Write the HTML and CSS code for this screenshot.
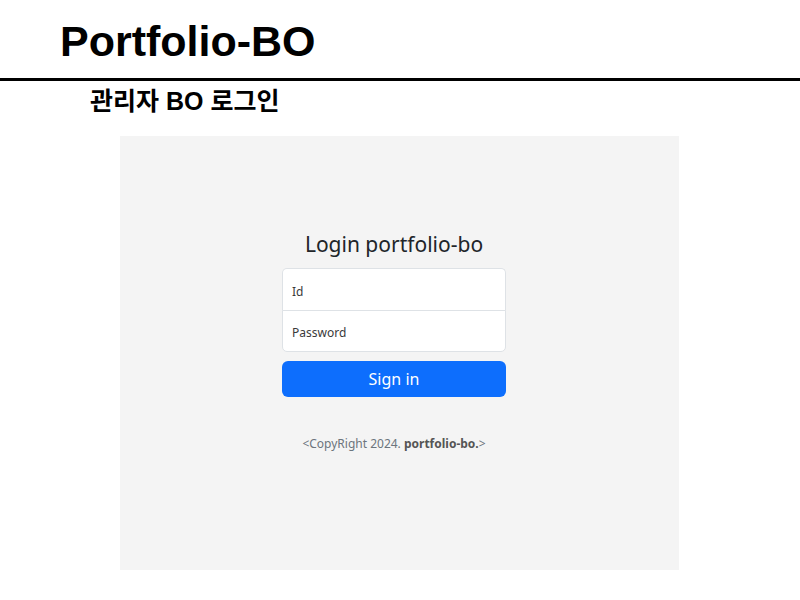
FILE: index.html
```html
<!DOCTYPE html>
<html lang="ko">
<head>
<meta charset="utf-8">
<title>Portfolio-BO</title>
<link rel="stylesheet" href="styles.css">
</head>
<body>
<header class="page-head">
  <h1 class="page-title">Portfolio-BO</h1>
</header>
<hr class="rule">
<h2 class="subtitle">관리자 BO 로그인</h2>
<main class="panel">
  <form class="signin">
    <h3 class="signin-title">Login portfolio-bo</h3>
    <div class="fields">
      <div class="field field-top">Id</div>
      <div class="field field-bottom">Password</div>
    </div>
    <button type="button" class="btn">Sign in</button>
    <p class="copy">&lt;CopyRight 2024. <b>portfolio-bo.</b>&gt;</p>
  </form>
</main>
</body>
</html>
```

FILE: styles.css
```css
html, body {
  margin: 0;
  padding: 0;
  background: #ffffff;
}
body {
  font-family: "Liberation Sans", Arial, "Noto Sans CJK KR", sans-serif;
  color: #000;
}
.page-head {
  padding: 16px 0 0 60px;
}
.page-title {
  margin: 0;
  font-size: 43px;
  line-height: 50px;
  font-weight: 700;
}
.rule {
  margin: 12px 0 0 0;
  border: 0;
  height: 3px;
  background: #000;
}
.subtitle {
  margin: 6px 0 0 90px;
  font-family: "Liberation Sans", Arial, "Noto Sans CJK KR", sans-serif;
  font-size: 25px;
  line-height: 28px;
  font-weight: 700;
}
.panel {
  margin: 21px 0 0 120px;
  width: 559px;
  height: 434px;
  box-sizing: border-box;
  padding-right: 11px;
  background: #f4f4f4;
  display: flex;
  justify-content: center;
}
.signin {
  width: 224px;
  padding-top: 94px;
  font-family: "Noto Sans", "Open Sans", sans-serif;
  display: flex;
  flex-direction: column;
}
.signin-title {
  margin: 0 0 10px;
  text-align: center;
  font-size: 21px;
  line-height: 28px;
  font-weight: 400;
  color: #212529;
}
.fields {
  display: flex;
  flex-direction: column;
}
.field {
  height: 42px;
  box-sizing: border-box;
  background: #fff;
  border: 1px solid #dee2e6;
  padding: 3px 9px 0;
  display: flex;
  align-items: center;
  font-size: 12px;
  color: #3a3a3a;
}
.field-top {
  height: 43px;
  border-radius: 5px 5px 0 0;
  border-bottom-color: #e3e3e3;
}
.field-bottom {
  margin-top: -1px;
  border-radius: 0 0 5px 5px;
}
.btn {
  margin-top: 9px;
  height: 36px;
  border: 0;
  border-radius: 6px;
  background: #0d6efd;
  color: #fff;
  font-family: "Noto Sans", "Open Sans", sans-serif;
  font-size: 16px;
  padding: 0;
}
.copy {
  margin: 39px 0 0;
  text-align: center;
  font-size: 12px;
  line-height: 16px;
  color: #6c757d;
}
.copy b {
  font-weight: 700;
  color: #555;
}
```
